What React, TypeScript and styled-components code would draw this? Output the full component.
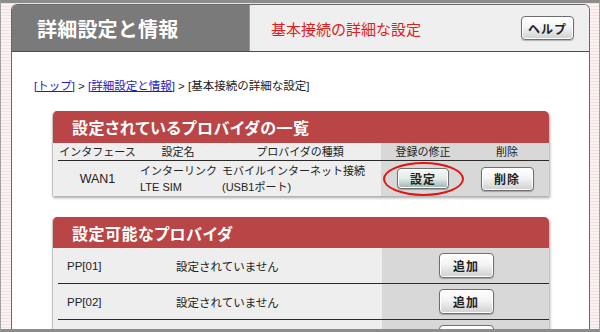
import styled, { createGlobalStyle, css } from "styled-components";

const JP = `"Liberation Sans", "Noto Sans CJK JP", sans-serif`;

const GlobalStyle = createGlobalStyle`
  html, body {
    margin: 0;
    padding: 0;
    background: #ffffff;
  }
  body {
    font-family: ${JP};
    color: #222;
  }
`;

const Frame = styled.div`
  box-sizing: border-box;
  width: 600px;
  height: 332px;
  overflow: hidden;
  display: flex;
  flex-direction: column;
  padding: 1px 9px 0 10px;
  border-top: 3px solid #8c8c8c;
  border-bottom: 3px solid #8c8c8c;
  border-left: 1px solid #a0a0a0;
  border-right: 1px solid #a0a0a0;
  background: repeating-linear-gradient(
    to bottom,
    #f4dfdf 0 1px,
    #fcf4f4 1px 3px
  );
`;

const Window = styled.div`
  flex: 1;
  display: flex;
  flex-direction: column;
  min-height: 0;
  overflow: hidden;
  background: #fff;
  border: 1px solid #6a6a6a;
  border-bottom: none;
  border-radius: 6px 6px 0 0;
`;

const Header = styled.header`
  display: flex;
  height: 46px;
  flex-shrink: 0;
  border-bottom: 1px solid #4e4e4e;
`;

const HeaderTitle = styled.div`
  width: 237px;
  display: flex;
  align-items: center;
  padding-left: 25px;
  box-sizing: border-box;
  background: #7a7a7a;
  color: #fff;
  font-size: 20px;
  font-weight: bold;
  letter-spacing: 0.2px;
`;

const HeaderSub = styled.div`
  flex: 1;
  display: flex;
  align-items: center;
  justify-content: space-between;
  padding: 0 15px 0 21px;
  background: #efefef;
  border-left: 1px solid #9a9a9a;
  color: #e01c1c;
  font-size: 15px;
`;

const Button = styled.button<{ $tone?: "teal"; $w: number; $h: number }>`
  width: ${(p) => p.$w}px;
  height: ${(p) => p.$h}px;
  padding: 0;
  font-family: ${JP};
  font-size: 12px;
  font-weight: bold;
  color: #222;
  letter-spacing: 1px;
  border: 1px solid #6f6f6f;
  border-radius: 4px;
  box-shadow: inset 0 0 0 1px #fff, 0 1px 1px rgba(0, 0, 0, 0.25);
  background: linear-gradient(#ffffff 0%, #f4f4f4 45%, #cfcfcf 100%);
  ${(p) =>
    p.$tone === "teal" &&
    css`
      background: linear-gradient(#f4f8f7 0%, #e3ecea 50%, #98b3ab 100%);
    `}
`;

const Content = styled.main`
  display: flex;
  flex-direction: column;
  padding: 27px 0 0 22px;
`;

const Crumbs = styled.div`
  font-size: 11.5px;
  line-height: 14px;
  color: #222;
  margin-bottom: 18px;
`;

const CrumbLink = styled.a`
  color: #1c1cc4;
  text-decoration: underline;
`;

const Card = styled.section<{ $gap?: number }>`
  width: 497px;
  margin-left: 18px;
  margin-bottom: ${(p) => p.$gap ?? 0}px;
  background: #eeeeee;
  border-radius: 5px 5px 0 0;
  box-shadow: 1px 2px 3px rgba(0, 0, 0, 0.35);
  border-left: 1px solid #c4c4c4;
  box-sizing: border-box;
  overflow: hidden;
`;

const CardTitle = styled.h2<{ $h: number }>`
  margin: 0;
  height: ${(p) => p.$h}px;
  display: flex;
  align-items: center;
  padding-left: 19px;
  background: #b94546;
  color: #fff;
  font-size: 16px;
  font-weight: bold;
  font-feature-settings: "palt";
  letter-spacing: 0.5px;
`;

const ListGrid = styled.div`
  display: grid;
  grid-template-columns: 79px 82px 162px 84px 84px;
  padding-left: 5px;
  font-size: 11px;
  white-space: nowrap;
`;

const Cell = styled.div<{ $gray?: boolean; $head?: boolean; $align?: string }>`
  display: flex;
  flex-direction: column;
  justify-content: center;
  align-items: ${(p) => p.$align ?? "center"};
  height: ${(p) => (p.$head ? 18 : 35)}px;
  line-height: 16px;
  box-sizing: border-box;
  position: relative;
  background: ${(p) => (p.$gray ? "#d8d8d8" : "transparent")};
  border-bottom: ${(p) => (p.$head ? "1px solid #2a2a2a" : "none")};
  padding-left: ${(p) => (p.$align === "flex-start" ? 3 : 0)}px;
`;

const Ellipse = styled.span`
  position: absolute;
  left: 2px;
  right: 1px;
  top: 1px;
  bottom: 0;
  border: 2px solid #e41414;
  border-radius: 50%;
  pointer-events: none;
`;

const ProvRow = styled.div`
  display: grid;
  grid-template-columns: 109px 215px 168px;
  margin-left: 5px;
  height: 36px;
  box-sizing: border-box;
  border-bottom: 1px solid #2a2a2a;
  font-size: 11.5px;
`;

const ProvCell = styled.div<{ $gray?: boolean }>`
  display: flex;
  align-items: center;
  justify-content: ${(p) => (p.$gray ? "center" : "flex-start")};
  padding-left: ${(p) => (p.$gray ? 0 : 9)}px;
  background: ${(p) => (p.$gray ? "#d8d8d8" : "transparent")};
`;

const providers = ["PP[01]", "PP[02]", "PP[03]"];

export default function App() {
  return (
    <>
      <GlobalStyle />
      <Frame>
        <Window>
          <Header>
            <HeaderTitle>詳細設定と情報</HeaderTitle>
            <HeaderSub>
              基本接続の詳細な設定
              <Button $w={53} $h={24}>
                ヘルプ
              </Button>
            </HeaderSub>
          </Header>
          <Content>
            <Crumbs>
              <CrumbLink href="#">[トップ]</CrumbLink> &gt;{" "}
              <CrumbLink href="#">[詳細設定と情報]</CrumbLink> &gt;
              [基本接続の詳細な設定]
            </Crumbs>

            <Card $gap={21}>
              <CardTitle $h={32}>設定されているプロバイダの一覧</CardTitle>
              <ListGrid>
                <Cell $head>インタフェース</Cell>
                <Cell $head>設定名</Cell>
                <Cell $head>プロバイダの種類</Cell>
                <Cell $head $gray>
                  登録の修正
                </Cell>
                <Cell $head $gray>
                  削除
                </Cell>

                <Cell style={{ fontSize: 12.5 }}>WAN1</Cell>
                <Cell $align="flex-start">
                  <span>インターリンク</span>
                  <span>LTE SIM</span>
                </Cell>
                <Cell $align="flex-start">
                  <span>モバイルインターネット接続</span>
                  <span>(USB1ポート)</span>
                </Cell>
                <Cell $gray>
                  <Button $tone="teal" $w={52} $h={21}>
                    設定
                  </Button>
                  <Ellipse />
                </Cell>
                <Cell $gray>
                  <Button $w={53} $h={24}>
                    削除
                  </Button>
                </Cell>
              </ListGrid>
            </Card>

            <Card>
              <CardTitle $h={31}>設定可能なプロバイダ</CardTitle>
              {providers.map((id) => (
                <ProvRow key={id}>
                  <ProvCell>{id}</ProvCell>
                  <ProvCell>設定されていません</ProvCell>
                  <ProvCell $gray>
                    <Button $w={55} $h={25}>
                      追加
                    </Button>
                  </ProvCell>
                </ProvRow>
              ))}
            </Card>
          </Content>
        </Window>
      </Frame>
    </>
  );
}
